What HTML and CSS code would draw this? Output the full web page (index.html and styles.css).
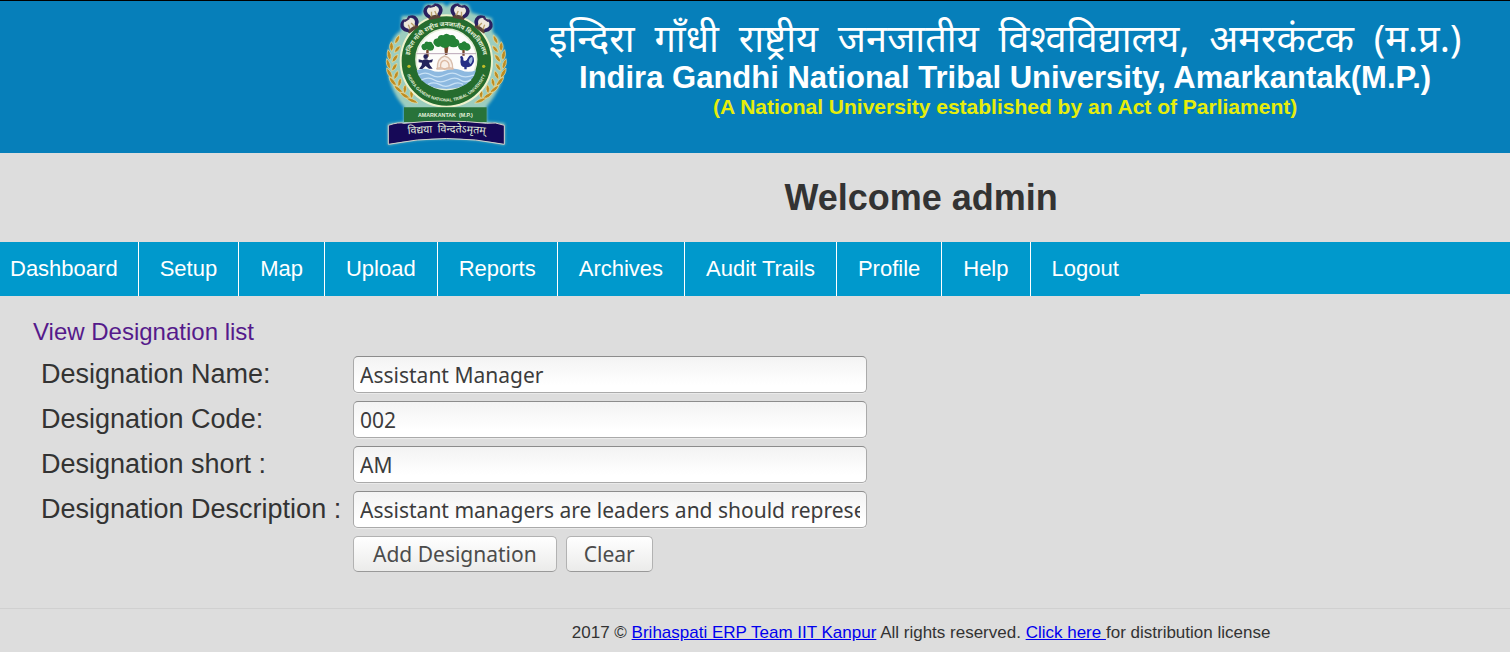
FILE: index.html
```html
<!DOCTYPE html>
<html lang="en">
<head>
<meta charset="utf-8">
<title>Add Designation</title>
<link rel="stylesheet" href="styles.css">
</head>
<body>
<div class="page">
  <header class="banner">
    <svg class="crest" viewBox="15 3 426 456" role="img" aria-label="University crest">
      <defs>
        <filter id="halo" x="-10%" y="-10%" width="120%" height="120%"><feGaussianBlur stdDeviation="5"/></filter>
        <path id="arc-top" d="M118 218A114 114 0 1 1 340 218"/>
        <path id="arc-bottom" d="M105 205A127 127 0 0 0 353 205"/>
        <path id="motto" d="M70 408Q229 387 390 408"/>
        <g id="horns">
          <path d="M-18 16Q-22 -12 0 -18Q22 -12 18 16Z" fill="#efe8dc"/>
          <path d="M-20 14H20L17 25H-17Z" fill="#5d4438"/>
          <path d="M-9 -20Q-30 -16 -29 2Q-27 16 -15 20L-11 12Q-20 4 -18 -4Q-16 -12 -5 -14ZM9 -20Q30 -16 29 2Q27 16 15 20L11 12Q20 4 18 -4Q16 -12 5 -14Z" fill="#2b2060"/>
          <path d="M-12 -20L0 -16L12 -20L8 -10H-8Z" fill="#3a2d60"/>
          <path d="M-8 16L-5 2M8 16L5 2" stroke="#b9a06c" stroke-width="4"/>
        </g>
        <g id="wheat" fill="#bd8c21" stroke="#f0e0a2" stroke-width="2">
          <path d="M75 132Q72 116 88 105Q91 123 75 132Z"/>
          <path d="M65 154Q53 141 64 125Q76 140 65 154Z"/>
          <path d="M73 158Q75 140 91 137Q90 153 73 158Z"/>
          <path d="M60 181Q47 168 54 149Q69 164 60 181Z"/>
          <path d="M66 187Q67 168 84 163Q84 181 66 187Z"/>
          <path d="M60 208Q45 195 50 176Q65 190 60 208Z"/>
          <path d="M65 213Q66 195 81 190Q82 207 65 213Z"/>
          <path d="M67 235Q48 224 50 204Q68 216 67 235Z"/>
          <path d="M72 239Q70 220 84 212Q89 228 72 239Z"/>
          <path d="M80 259Q59 251 57 230Q77 240 80 259Z"/>
          <path d="M85 261Q80 243 92 234Q99 248 85 261Z"/>
          <path d="M99 280Q77 275 71 255Q93 262 99 280Z"/>
          <path d="M103 281Q95 263 106 254Q115 268 103 281Z"/>
          <path d="M121 298Q99 296 89 276Q112 280 121 298Z"/>
          <path d="M124 296Q115 279 124 270Q136 282 124 296Z"/>
          <path d="M144 309Q122 311 109 294Q131 293 144 309Z"/>
        </g>
      </defs>
      <path d="M92 92L95 48L155 45L165 14L218 8L230 20L243 8L295 14L305 38L366 55L369 98Q400 115 404 180Q405 255 350 320V365L404 370V434Q229 397 55 434L54 372L102 365V320Q50 263 53 180Q58 112 92 92Z" fill="#cfe8c0" filter="url(#halo)" opacity=".75"/>
      <use href="#wheat"/>
      <use href="#wheat" transform="translate(458 0) scale(-1 1)"/>
      <circle cx="229" cy="183" r="137" fill="#256c2e" stroke="#eff3cd" stroke-width="6"/>
      <use href="#horns" transform="translate(118 70) rotate(-34)"/>
      <use href="#horns" transform="translate(189 32) rotate(-12)"/>
      <use href="#horns" transform="translate(270 32) rotate(12)"/>
      <use href="#horns" transform="translate(341 70) rotate(34)"/>
      <circle cx="229" cy="178" r="91" fill="#fdfdfb" stroke="#e3edd7" stroke-width="5"/>
      <text class="ring-hindi"><textPath href="#arc-top" startOffset="50%">इन्दिरा गाँधी राष्ट्रीय जनजातीय विश्वविद्यालय</textPath></text>
      <text class="ring-english"><textPath href="#arc-bottom" startOffset="50%">INDIRA GANDHI NATIONAL TRIBAL UNIVERSITY</textPath></text>
      <circle cx="117" cy="199" r="5" fill="#c0bd29"/><circle cx="341" cy="199" r="5" fill="#c0bd29"/>
      <path d="M140 211Q164 202 184 211T229 211T274 211T318 211Q305 266 229 267Q154 266 140 211Z" fill="#8db9e0"/>
      <path d="M146 225Q166 214 184 225T225 225T266 225T312 225M154 240Q176 229 193 240T233 240T271 240T303 239M174 253Q193 244 210 254T245 254T279 253" fill="none" stroke="#c9e2f6" stroke-width="4"/>
      <path d="M222 136H236L232 165H225ZM169 149H176V170H168ZM277 149H284V167H277Z" fill="#76472c"/>
      <g fill="#258236">
        <path d="M190 129Q190 116 203 115Q207 102 220 106Q229 97 240 106Q254 102 258 116Q270 119 268 134Q255 147 238 139Q225 149 211 139Q199 145 190 129Z"/>
        <path d="M154 139Q155 130 163 131Q166 121 176 126Q185 123 188 132Q197 140 188 151Q176 155 171 148Q157 157 154 139Z"/>
        <path d="M264 139Q265 128 274 129Q283 119 290 129Q302 131 302 145Q296 157 282 149Q268 155 264 139Z"/>
      </g>
      <path d="M139 161H319" stroke="#baa7b7" stroke-width="3"/>
      <circle cx="167" cy="170" r="7" fill="#24235b"/>
      <path d="M146 178L158 181Q167 174 177 181L189 178L186 187L177 188L180 196L188 206H177L167 198L157 207H147L155 196L156 188L146 187Z" fill="#24235b"/>
      <path d="M270 170L276 167Q281 172 280 181Q289 187 294 173Q303 159 311 173Q316 193 297 201L290 202V208H283V202Q268 198 272 176Z" fill="#252e86"/>
      <path d="M296 185Q298 171 307 171Q310 184 301 193Z" fill="#a3badd"/>
      <path d="M202 207Q201 174 224 168Q249 175 248 207Z" fill="#f8efe8" stroke="#d8bfae" stroke-width="4"/>
      <path d="M212 205Q209 183 224 181Q240 184 237 205M199 207Q211 198 224 208Q237 198 251 207" fill="none" stroke="#dcb9a2" stroke-width="4"/>
      <path d="M102 322H350V366H102Z" fill="#28733a"/>
      <text class="place" x="226" y="352">AMARKANTAK &nbsp;(M.P.)</text>
      <path d="M55 376Q87 365 102 370Q229 356 350 370Q377 365 403 376V433Q229 398 55 433Z" fill="#160957" stroke="#d4d2cc" stroke-width="3"/>
      <text class="motto"><textPath href="#motto" startOffset="50%">विद्यया &nbsp;विन्दतेऽमृतम्</textPath></text>
    </svg>
    <div class="titles">
      <div class="title-hindi" lang="hi">इन्दिरा&nbsp; गाँधी&nbsp; राष्ट्रीय&nbsp; जनजातीय&nbsp; विश्वविद्यालय,&nbsp; अमरकंटक&nbsp; (म.प्र.)</div>
      <div class="title-english">Indira Gandhi National Tribal University, Amarkantak(M.P.)</div>
      <div class="title-note">(A National University established by an Act of Parliament)</div>
    </div>
  </header>

  <h1 class="welcome">Welcome admin</h1>

  <nav class="menu">
    <a href="#">Dashboard</a>
    <a href="#">Setup</a>
    <a href="#">Map</a>
    <a href="#">Upload</a>
    <a href="#">Reports</a>
    <a href="#">Archives</a>
    <a href="#">Audit Trails</a>
    <a href="#">Profile</a>
    <a href="#">Help</a>
    <a href="#">Logout</a>
  </nav>

  <main class="content">
    <a class="list-link" href="#">View Designation list</a>
    <form class="designation">
      <label for="name">Designation Name:</label>
      <input id="name" type="text" value="Assistant Manager">
      <label for="code">Designation Code:</label>
      <input id="code" type="text" value="002">
      <label for="short">Designation short :</label>
      <input id="short" type="text" value="AM">
      <label for="description">Designation Description :</label>
      <input id="description" type="text" value="Assistant managers are leaders and should represent">
      <div class="actions">
        <button class="submit" type="button">Add Designation</button>
        <button type="reset">Clear</button>
      </div>
    </form>
  </main>

  <footer class="footer">2017 © <a href="#">Brihaspati ERP Team IIT Kanpur</a> All rights reserved. <a href="#">Click here </a>for distribution license</footer>
</div>
</body>
</html>
```
FILE: styles.css
```css
* { box-sizing: border-box; }

html { overflow: hidden; }

body {
  margin: 0;
  background: #ddd;
  color: #333;
  font-family: "Liberation Sans", Arial, sans-serif;
}

/* The page is laid out wider than the window and runs off its right side. */
.page { width: 122%; }

.banner {
  display: flex;
  justify-content: center;
  gap: 26px;
  border-top: 1px solid #000;
  background: #067fba;
}

.crest { display: block; width: 142px; height: 152px; }
.crest text { text-anchor: middle; fill: #e5f1dc; }
.ring-hindi { font: bold 18px "Noto Sans", sans-serif; }
.ring-english { font: bold 13px "Liberation Sans", sans-serif; }
.place { font: bold 16px "Liberation Sans", sans-serif; }
.motto { font: 32px "Noto Sans", sans-serif; }

.titles { min-width: 924px; padding-top: 12px; text-align: center; white-space: nowrap; color: #fff; }
.title-hindi { font: 38px/48px "Noto Sans", sans-serif; }
.title-english { font-size: 31px; font-weight: bold; line-height: 34px; }
.title-note { font-size: 21px; font-weight: bold; line-height: 24px; color: #e6ed0b; }

.welcome { margin: 0; padding: 24px 0; font-size: 36px; line-height: 41px; text-align: center; }

.menu { display: flex; align-items: flex-start; height: 52px; background: #09c; }
.menu a {
  padding: 0 21px;
  border-right: 1px solid #fff;
  background: #09c;
  color: #fff;
  font-size: 22px;
  line-height: 54px;
  text-decoration: none;
}
.menu a:first-child { padding: 0 20px 0 10px; }
.menu a:last-child { border-right: 0; }

.content { padding: 24px 33px 36px; }
.list-link { display: block; color: #551a8b; font-size: 24px; line-height: 28px; text-decoration: none; }

.designation {
  display: grid;
  grid-template-columns: 304px 514px;
  gap: 8px;
  padding: 10px 8px 0;
}
.designation label { font-size: 27px; line-height: 37px; white-space: nowrap; }
.designation input {
  width: 100%;
  height: 37px;
  padding: 0 6px;
  border: 1px solid #aaa;
  border-top-color: #8c8c8c;
  border-radius: 5px;
  background: linear-gradient(#f3f3f3, #fff 80%);
  box-shadow: 0 1px #eaeaea;
  color: #3c3c3c;
  font: 21px "Noto Sans", sans-serif;
}

.actions { display: flex; grid-column: 2; gap: 9px; }
.actions button {
  height: 36px;
  padding: 0 17px;
  border: 1px solid #b2b2b2;
  border-bottom-color: #999;
  border-radius: 5px;
  background: linear-gradient(#fff, #ebebea);
  color: #4c4c4c;
  font: 21px/32px "Noto Sans", sans-serif;
}
.actions .submit { padding: 0 19px; }

.footer { padding: 14px 0; border-top: 1px solid #d0d0d0; font-size: 17px; line-height: 20px; text-align: center; }
.footer a { color: #00e; }
```
